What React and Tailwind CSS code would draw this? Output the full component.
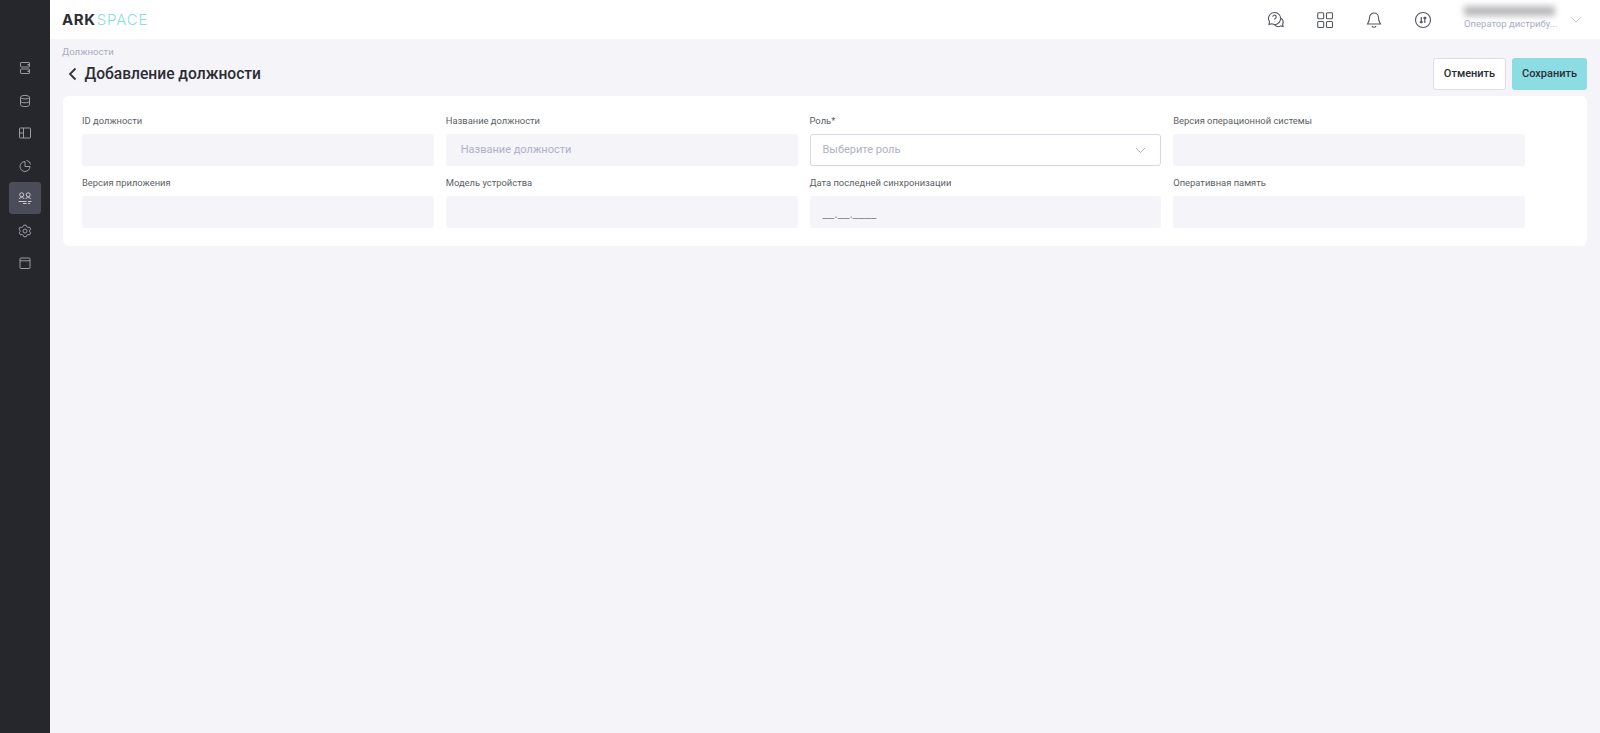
import React from "react";

function Field({ label, children }) {
  return (
    <div className="flex flex-col">
      <label className="h-[20px] text-[9.400px] leading-[14px] text-[#5c5f66] font-['Roboto',sans-serif]">{label}</label>
      {children}
    </div>
  );
}

function Box({ children }) {
  return <div className="h-[32px] rounded-[3px] bg-[#f4f4f9] flex items-center pl-[15px] text-[11px] text-[#aeb1c7]">{children}</div>;
}

const S = { width: 14, height: 14, viewBox: "0 0 14 14", fill: "none", stroke: "#9b9da6", strokeWidth: 1 };

function SideIcons({ i }) {
  if (i === 0) return (
    <svg {...S}><rect x="2.500" y="1.500" width="9" height="4.500" rx=".6"/><rect x="2.500" y="8" width="9" height="4.500" rx=".6"/><path d="M9.500 3.700h2M9.500 10.200h2" strokeWidth="1.600"/></svg>
  );
  if (i === 1) return (
    <svg {...S}><ellipse cx="7" cy="3.200" rx="4.500" ry="1.800"/><path d="M2.500 3.200v7.600c0 1 2 1.800 4.500 1.800s4.500-.8 4.500-1.800V3.200M2.500 7c0 1 2 1.800 4.500 1.800s4.500-.8 4.500-1.800"/></svg>
  );
  if (i === 2) return (
    <svg {...S}><rect x="1.500" y="2" width="11" height="10" rx=".6"/><path d="M5.500 2v10M1.500 7h4"/></svg>
  );
  if (i === 3) return (
    <svg {...S}><path d="M7 2.500a5 5 0 1 0 5 5H7z"/><path d="M8.500 1.500a4.500 4.500 0 0 1 4 4"/></svg>
  );
  if (i === 4) return (
    <svg width="14" height="14" viewBox="0 0 14 14" fill="none" stroke="#c8c9d1" strokeWidth="1"><circle cx="3.700" cy="3.800" r="2"/><circle cx="10.200" cy="3.800" r="2"/><path d="M1 8c.6-1 1.500-1.400 2.700-1.400S5.800 7 6.400 8M7.600 8c.6-1 1.500-1.400 2.700-1.400S12.400 7 13 8M.5 10.500h8M10 10.500h3.500M5 12.500h3.500M10 12.500h2"/></svg>
  );
  if (i === 5) return (
    <svg {...S}><path d="M5.800 1.500h2.400l.4 1.500 1.400.8 1.500-.4 1.200 2-1.100 1.100v1.600l1.100 1.100-1.200 2-1.500-.4-1.400.8-.4 1.500H5.800l-.4-1.500-1.400-.8-1.500.4-1.200-2L2 8.100V6.500L.9 5.400l1.200-2 1.500.4 1.400-.8z" transform="translate(0 -.3)"/><circle cx="7" cy="7" r="2"/></svg>
  );
  return (
    <svg {...S}><rect x="2" y="2" width="10" height="10.500" rx="1"/><path d="M2 4.800h10"/></svg>
  );
}

const T = { width: 18, height: 18, viewBox: "0 0 18 18", fill: "none", stroke: "#55585f", strokeWidth: 1.1 };

export default function App() {
  return (
    <div className="flex h-[733px] w-full overflow-hidden bg-[#f4f4f9] font-['Roboto',sans-serif]">
      <aside className="w-[50px] shrink-0 bg-[#25272d] flex flex-col items-center gap-[0.5px] pt-[52px]">
        {[0, 1, 2, 3, 4, 5, 6].map((i) => (
          <div key={i} className={`w-[32px] h-[32px] rounded-[3px] flex items-center justify-center ${i === 4 ? "bg-[#4a4c57]" : ""}`}>
            <SideIcons i={i} />
          </div>
        ))}
      </aside>
      <div className="flex-1 min-w-0 flex flex-col">
        <header className="h-[39px] bg-white flex items-center pl-[12px] pr-[14px] shrink-0">
          <div className="flex items-baseline text-[15px] leading-none font-['Inter',sans-serif]">
            <span className="font-bold text-[#2b2d33] tracking-[0.6px]">ARK</span>
            <span className="font-light text-[#8bdde3] tracking-[0.9px] ml-[1px]">SPACE</span>
          </div>
          <div className="ml-auto flex items-center">
            <div className="flex items-center gap-[31px] mr-[32px]">
              <svg {...T}>
                <path d="M7.500 1.500a6 6 0 0 0-5 9.300L2 13.500l2.800-.7A6 6 0 1 0 7.500 1.500z"/>
                <path d="M13.600 7a4.500 4.500 0 0 1 2 6.200l.5 2.300-2.500-.6a4.500 4.500 0 0 1-5.800-1"/>
                <path d="M5.800 5.800a1.700 1.700 0 1 1 2.700 1.400c-.6.4-.9.7-.9 1.300M7.600 10v.3"/>
              </svg>
              <svg {...T}><rect x="1.700" y="1.700" width="6" height="6" rx="1"/><rect x="10.500" y="1.700" width="6" height="6" rx="1"/><rect x="1.700" y="10.500" width="6" height="6" rx="1"/><rect x="10.500" y="10.500" width="6" height="6" rx="1"/></svg>
              <svg {...T}><path d="M9 2a4.500 4.500 0 0 0-4.500 4.500c0 4-1.500 5.500-2 6.500h13c-.5-1-2-2.500-2-6.500A4.500 4.500 0 0 0 9 2zM7 15a2.200 2.200 0 0 0 4 0"/></svg>
              <svg {...T}><circle cx="9" cy="9" r="7.500"/><path d="M7.300 6v6M7.300 12l-1.500-1.500M7.300 12l1.300-1.500M10.800 12V6M10.800 6l-1.300 1.500M10.800 6l1.500 1.500" strokeWidth="1.200"/></svg>
            </div>
            <div className="w-[92px] flex flex-col">
              <div className="h-[10px] w-[91px] -mt-[2px] bg-[#b9b9bc] blur-[3px] rounded-[2px]"></div>
              <div className="mt-[1px] text-[9.500px] leading-[14px] text-[#a9abc4] whitespace-nowrap">Оператор дистрибу...</div>
            </div>
            <svg className="ml-[14px] mr-[4px]" width="12" height="8" viewBox="0 0 12 8" fill="none" stroke="#c6c8da"><path d="M1.500 1.500 6 6l4.500-4.500"/></svg>
          </div>
        </header>
        <main className="flex-1 px-[13px]">
          <div className="flex justify-between">
            <div>
              <div className="text-[9.600px] leading-[14px] pt-[6px] -ml-[1px] text-[#a9abc4]">Должности</div>
              <div className="flex items-center h-[26px] mt-[2px]">
                <svg className="ml-[5px] mr-[7.500px]" width="9" height="14" viewBox="0 0 9 14" fill="none" stroke="#33353b" strokeWidth="1.800"><path d="M7.500 1.500 2 7l5.500 5.500"/></svg>
                <h1 className="text-[15.600px] font-medium leading-[24px] text-[#2b2d33]">Добавление должности</h1>
              </div>
            </div>
            <div className="flex gap-[6px] pt-[19px]">
              <button className="w-[73px] h-[32px] rounded-[3px] bg-white border border-[#dcdde8] text-[11px] font-medium text-[#2b2d33]">Отменить</button>
              <button className="w-[75px] h-[32px] rounded-[3px] bg-[#8bdde3] text-[11px] font-medium text-[#2b3036]">Сохранить</button>
            </div>
          </div>
          <section className="mt-[6px] h-[150px] rounded-[6px] bg-white pl-[19px] pr-[62px] pt-[18px]">
            <div className="grid grid-cols-4 gap-x-[12px] gap-y-[10px]">
              <Field label="ID должности"><Box /></Field>
              <Field label="Название должности"><Box>Название должности</Box></Field>
              <Field label="Роль*">
                <div className="h-[32px] rounded-[3px] bg-white border border-[#d5d6e6] flex items-center justify-between pl-[12px] pr-[14px] text-[11px] text-[#aeb1c7]">
                  <span>Выберите роль</span>
                  <svg width="11" height="7" viewBox="0 0 11 7" fill="none" stroke="#aeb1c7"><path d="M1 1l4.500 4.500L10 1"/></svg>
                </div>
              </Field>
              <Field label="Версия операционной системы"><Box /></Field>
              <Field label="Версия приложения"><Box /></Field>
              <Field label="Модель устройства"><Box /></Field>
              <Field label="Дата последней синхронизации">
                <div className="h-[32px] rounded-[3px] bg-[#f4f4f9] pl-[13px] pt-[11px] text-[13px] leading-[14px] text-[#8d8f99]">__.__.____</div>
              </Field>
              <Field label="Оперативная память"><Box /></Field>
            </div>
          </section>
        </main>
      </div>
    </div>
  );
}
